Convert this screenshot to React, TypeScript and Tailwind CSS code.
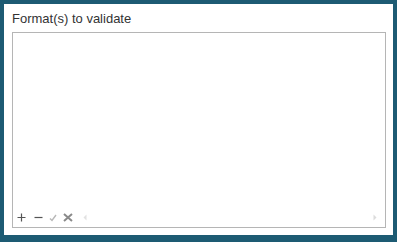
import React from 'react';

export default function App() {
  return (
    <div className="w-[397px] h-[242px] bg-[#1d5b73] pt-[4px] pl-[4px] pr-[4px] pb-[7px]" style={{ fontFamily: '"Liberation Sans", Arial, sans-serif' }}>
      <div className="h-full bg-white flex flex-col pl-[8px] pr-[7px] pt-[5px] pb-[7px]">
        <div className="text-[13px] leading-[20px] text-[#333]">Format(s) to validate</div>
        <div className="mt-[3px] flex-1 border border-[#b5b5b5] flex flex-col justify-end">
          <div className="flex items-center h-[17px] pl-[4px] pr-[8px] pb-[2px]">
            {/* add */}
            <svg width="9" height="9" viewBox="0 0 9 9" className="mr-[8px]">
              <path d="M4.5 0.5v8M0.5 4.5h8" stroke="#555" strokeWidth="1.2" />
            </svg>
            {/* remove */}
            <svg width="9" height="9" viewBox="0 0 9 9" className="mr-[6px]">
              <path d="M0.5 4.5h8" stroke="#555" strokeWidth="1.2" />
            </svg>
            {/* apply */}
            <svg width="8" height="8" viewBox="0 0 8 8" className="mr-[6px]">
              <path d="M1 4.5l2 2L7 1" stroke="#b8b8b8" strokeWidth="1.4" fill="none" />
            </svg>
            {/* cancel */}
            <svg width="10" height="9" viewBox="0 0 10 9" className="mr-[10px]">
              <path d="M1 1l8 7M9 1l-8 7" stroke="#8a8a8a" strokeWidth="2" />
            </svg>
            <svg width="4" height="7" viewBox="0 0 4 7">
              <path d="M3.5 0.5v6L0.5 3.5z" fill="#e2e2e2" />
            </svg>
            <div className="flex-1" />
            <svg width="4" height="7" viewBox="0 0 4 7">
              <path d="M0.5 0.5v6L3.5 3.5z" fill="#dcdcdc" />
            </svg>
          </div>
        </div>
      </div>
    </div>
  );
}
